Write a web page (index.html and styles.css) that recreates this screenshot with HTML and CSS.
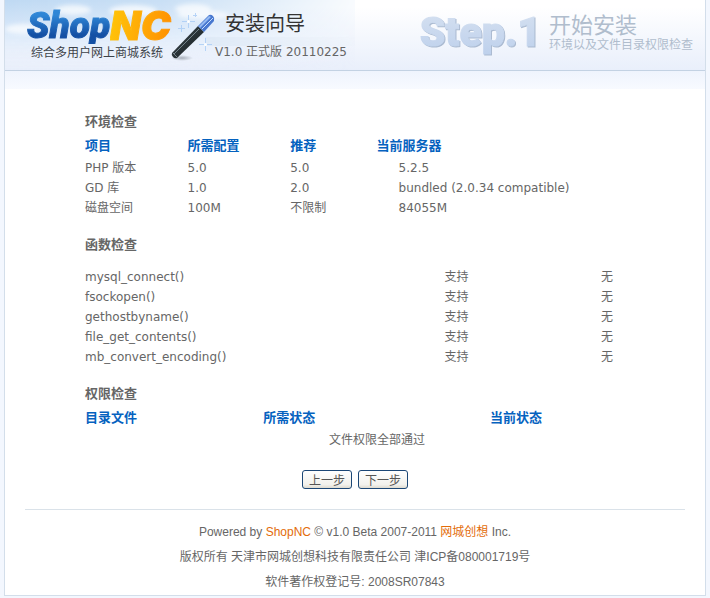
FILE: index.html
```html
<!DOCTYPE html>
<html lang="zh-CN">
<head>
<meta charset="utf-8">
<title>ShopNC 安装向导</title>
<link rel="stylesheet" href="styles.css">
</head>
<body>
<div class="page">
  <header class="header">
    <svg class="sky" viewBox="0 0 350 70" width="350" height="70" aria-hidden="true">
      <defs>
        <linearGradient id="skyDown" x1="0" y1="0" x2="0" y2="1">
          <stop offset="0" stop-color="#bfd9f3"/>
          <stop offset=".5" stop-color="#dceafa"/>
          <stop offset="1" stop-color="#e8eefa" stop-opacity="0"/>
        </linearGradient>
        <linearGradient id="fade" x1="0" y1="0" x2="1" y2="0">
          <stop offset="0" stop-color="#fff"/>
          <stop offset=".45" stop-color="#fff" stop-opacity=".85"/>
          <stop offset="1" stop-color="#fff" stop-opacity=".1"/>
        </linearGradient>
        <mask id="skyMask"><rect width="350" height="70" fill="url(#fade)"/></mask>
        <filter id="soft"><feGaussianBlur stdDeviation="2"/></filter>
      </defs>
      <g mask="url(#skyMask)">
        <rect width="350" height="70" fill="url(#skyDown)"/>
        <g fill="#fff" opacity=".7" filter="url(#soft)">
          <ellipse cx="18" cy="29" rx="18" ry="5"/>
          <ellipse cx="68" cy="10" rx="18" ry="5"/>
          <ellipse cx="128" cy="11" rx="24" ry="6"/>
          <ellipse cx="188" cy="9" rx="18" ry="5"/>
          <ellipse cx="198" cy="15" rx="26" ry="4"/>
        </g>
        <rect x="200" y="37" width="150" height="9" fill="#c9dcee" opacity=".5"/>
      </g>
    </svg>
    <div class="brand">
      <div class="logo"><span class="logo-shop">Shop</span><span class="logo-nc">NC</span></div>
      <div class="tagline">综合多用户网上商城系统</div>
    </div>
    <svg class="wand" viewBox="0 0 50 54" width="50" height="54" aria-hidden="true">
      <defs>
        <linearGradient id="stick" x1="0" y1="0" x2="1" y2="1">
          <stop offset="0" stop-color="#617078"/>
          <stop offset=".35" stop-color="#303a3f"/>
          <stop offset="1" stop-color="#101719"/>
        </linearGradient>
        <radialGradient id="shade"><stop offset="0" stop-color="#667079" stop-opacity=".5"/><stop offset="1" stop-color="#667079" stop-opacity="0"/></radialGradient>
      </defs>
      <ellipse cx="11" cy="47" rx="11" ry="3" fill="url(#shade)"/>
      <g stroke="#a9ccf6" stroke-width="1" opacity=".8">
        <path d="M17.500 4v13M11 10.500h13"/>
        <path d="M10.500 14v7M7 17.500h7"/>
        <path d="M34.500 27v13M28 33.500h13"/>
        <path d="M24.500 2v4M22 4.500h4"/>
      </g>
      <circle cx="17.500" cy="10.500" r="1.500" fill="#fff"/>
      <circle cx="34.500" cy="33.500" r="1.500" fill="#fff"/>
      <path d="M1 42 27 15l6 6L6 47q-2 1-4-1t-1-4z" fill="url(#stick)"/>
      <path d="M3 43 28 18" stroke="#75848b" stroke-width="1"/>
      <path d="M27 15 38 4q2-1 4 1t1 5L33 21z" fill="#4878d0"/>
      <path d="M28 15 38 5l2 1-11 11z" fill="#94b9f2"/>
      <path d="m31 18 11-11" stroke="#c6defd" stroke-width="1"/>
      <path d="m2 42 4 4" stroke="#78848b" stroke-width="1"/>
    </svg>
    <div class="wizard">
      <h1 class="wizard-title">安装向导</h1>
      <div class="version">V1.0 正式版 20110225</div>
    </div>
    <div class="step">
      <div class="step-number">Step.1</div>
      <div class="step-text">
        <h2 class="step-title">开始安装</h2>
        <p class="step-note">环境以及文件目录权限检查</p>
      </div>
    </div>
  </header>

  <main class="content">
    <section class="check">
      <h3 class="check-title">环境检查</h3>
      <table class="grid env">
        <thead><tr><th>项目</th><th>所需配置</th><th>推荐</th><th>当前服务器</th></tr></thead>
        <tbody>
          <tr><td>PHP 版本</td><td>5.0</td><td>5.0</td><td>5.2.5</td></tr>
          <tr><td>GD 库</td><td>1.0</td><td>2.0</td><td>bundled (2.0.34 compatible)</td></tr>
          <tr><td>磁盘空间</td><td>100M</td><td>不限制</td><td>84055M</td></tr>
        </tbody>
      </table>
    </section>
    <section class="check">
      <h3 class="check-title spaced">函数检查</h3>
      <table class="grid funcs">
        <tbody>
          <tr><td>mysql_connect()</td><td>支持</td><td>无</td></tr>
          <tr><td>fsockopen()</td><td>支持</td><td>无</td></tr>
          <tr><td>gethostbyname()</td><td>支持</td><td>无</td></tr>
          <tr><td>file_get_contents()</td><td>支持</td><td>无</td></tr>
          <tr><td>mb_convert_encoding()</td><td>支持</td><td>无</td></tr>
        </tbody>
      </table>
    </section>
    <section class="check">
      <h3 class="check-title">权限检查</h3>
      <table class="grid perms">
        <thead><tr><th>目录文件</th><th>所需状态</th><th>当前状态</th></tr></thead>
        <tbody><tr><td class="all-pass" colspan="3">文件权限全部通过</td></tr></tbody>
      </table>
    </section>
    <div class="actions">
      <button type="button" class="btn">上一步</button>
      <button type="button" class="btn">下一步</button>
    </div>
  </main>

  <footer class="footer">
    <p>Powered by <a href="#">ShopNC</a> © v1.0 Beta 2007-2011 <a href="#">网城创想</a> Inc.</p>
    <p>版权所有 天津市网城创想科技有限责任公司 津ICP备080001719号</p>
    <p>软件著作权登记号: 2008SR07843</p>
  </footer>
</div>
</body>
</html>
```
FILE: styles.css
```css
* { box-sizing: border-box; }

body {
  margin: 0;
  padding: 0 4px;
  background: #f3f7fe;
  color: #666;
  font: 12px/20px "DejaVu Sans", "Noto Sans CJK SC", sans-serif;
}

h1, h2, h3, p { margin: 0; font-weight: normal; }

.page {
  border: 1px solid #d3deea;
  border-top: 0;
  background: #fff linear-gradient(#eff4fd, #f8faff) 0 71px / 100% 18px no-repeat;
}

.header {
  position: relative;
  display: flex;
  height: 71px;
  padding: 0 12px 0 22px;
  border-bottom: 1px solid #c3d2e3;
  background: linear-gradient(#fff 10%, #e9effb);
  white-space: nowrap;
}

.sky { position: absolute; left: 0; top: 0; }

.brand, .wand, .wizard, .step { position: relative; flex: none; }

.brand { width: 144px; padding-top: 8px; }

.logo {
  display: flex;
  font: italic 900 37px/36px Roboto, sans-serif;
}

.logo-shop, .logo-nc {
  flex: none;
  -webkit-background-clip: text;
  background-clip: text;
  color: transparent;
  -webkit-text-stroke: 1px transparent;
}

.logo-shop { background-image: linear-gradient(#2f86d6 20%, #1450a4 75%); }

.logo-nc {
  padding-right: 6px;
  background-image: linear-gradient(100deg, #ffc60a, #ff8a00);
  font-family: Inter, sans-serif;
  font-size: 40px;
}

.tagline {
  padding-left: 4px;
  color: #3c4248;
  font-size: 12px;
  line-height: 18px;
}

.wand { margin-top: 11px; }

.wizard { margin-left: -6px; padding-top: 10px; }

.wizard-title {
  padding-left: 10px;
  color: #333;
  font: 20px/26px "Noto Sans CJK SC", sans-serif;
}

.version { margin-top: 6px; }

.step {
  display: flex;
  gap: 8px;
  margin-left: auto;
}

.step-number {
  padding-top: 8px;
  background: linear-gradient(#d3dff0 20%, #bdd0ec 80%);
  -webkit-background-clip: text;
  background-clip: text;
  color: transparent;
  -webkit-text-stroke: 1px transparent;
  filter: drop-shadow(1px 1px 0 #a9b9d0);
  font: 900 41px/48px Roboto, sans-serif;
}

.step-text { padding-top: 10px; color: #b0bdcd; }
.step-title { font: 22px/26px "Noto Sans CJK SC", sans-serif; }
.step-note { line-height: 18px; }

.content { padding: 41px 80px 0; }

.check { margin-bottom: 17px; }

.check-title {
  font-size: 13px;
  font-weight: bold;
  line-height: 20px;
}

.check-title.spaced { margin-bottom: 12px; }

.grid {
  width: 100%;
  border-collapse: collapse;
  table-layout: fixed;
}

.grid th, .grid td { padding: 0; text-align: left; white-space: nowrap; }

.grid th {
  height: 26px;
  padding-top: 2px;
  color: #0562bf;
  font-size: 13px;
}

.env th:nth-child(1), .env th:nth-child(2) { width: 19%; }
.env th:nth-child(3) { width: 16%; }
.env td:nth-child(4) { padding-left: 22px; }

.funcs td:nth-child(2) { width: 29%; }
.funcs td:nth-child(3) { width: 24px; }

.perms th:nth-child(1) { width: 33%; }
.perms th:nth-child(2) { width: 42%; }
.perms .all-pass { padding-left: 44px; text-align: center; }

.actions {
  display: flex;
  justify-content: center;
  gap: 6px;
  padding-top: 3px;
}

.btn {
  width: 50px;
  height: 19px;
  padding: 0;
  border: 1px solid #1c4776;
  border-radius: 3px;
  background: linear-gradient(#fff, #f2f1ec 80%, #dedbd0);
  color: #555;
  font: 12px/16px "Noto Sans CJK SC", sans-serif;
}

.footer {
  margin: 20px 20px 0;
  padding-top: 10px;
  border-top: 1px solid #dae2e9;
  font: 12px/25px "Liberation Sans", "Noto Sans CJK SC", sans-serif;
  text-align: center;
}

.footer a { color: #e36c0a; text-decoration: none; }
```
